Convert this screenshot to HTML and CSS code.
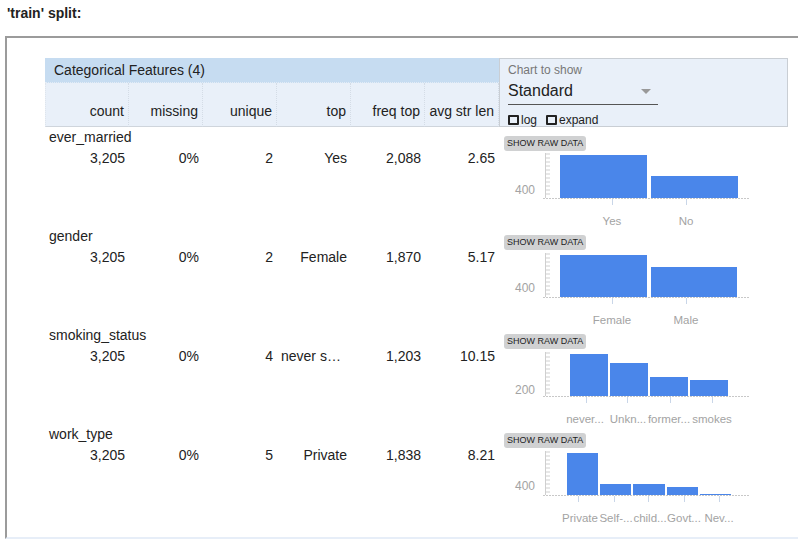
FILE: index.html
```html
<!DOCTYPE html>
<html>
<head>
<meta charset="utf-8">
<link rel="stylesheet" href="styles.css">
</head>
<body>
<div class="title">'train' split:</div>
<div class="outer">
  <div class="table">
    <div class="band">Categorical Features (4)</div>
    <div class="panel">
      <div class="panel-label">Chart to show</div>
      <div class="select"><span>Standard</span><span class="caret"></span></div>
      <div class="checks">
        <label class="check"><span class="box"></span>log</label>
        <label class="check"><span class="box"></span>expand</label>
      </div>
    </div>
    <div class="th first">count</div>
    <div class="th">missing</div>
    <div class="th">unique</div>
    <div class="th">top</div>
    <div class="th">freq top</div>
    <div class="th">avg str len</div>
  </div>

  <div class="feat">
    <div class="name">ever_married</div>
    <div class="val">3,205</div><div class="val">0%</div><div class="val">2</div><div class="val">Yes</div><div class="val">2,088</div><div class="val">2.65</div>
    <div class="chart">
      <span class="rawbtn">SHOW RAW DATA</span>
      <svg class="plot" width="289" height="75" viewBox="0 0 289 75">
        <g class="yaxis"><path d="M46.5 1V46M46 2h5M46 6h5M46 10h5M46 14h5M46 18h5M46 22h5M46 26h5M46 30h5M46 34h5M46 38h5M46 42h5"/></g>
        <rect class="bar" x="61" y="3" width="87" height="43"/>
        <rect class="bar" x="152" y="24" width="87" height="22"/>
        <path class="base" d="M44 46.5H250"/>
        <path class="xt" d="M113.5 47v6M187.5 47v6"/>
        <text class="ylab" x="36" y="42">400</text>
        <text class="xlab" x="113" y="73">Yes</text>
        <text class="xlab" x="187" y="73">No</text>
      </svg>
    </div>
  </div>

  <div class="feat">
    <div class="name">gender</div>
    <div class="val">3,205</div><div class="val">0%</div><div class="val">2</div><div class="val">Female</div><div class="val">1,870</div><div class="val">5.17</div>
    <div class="chart">
      <span class="rawbtn">SHOW RAW DATA</span>
      <svg class="plot" width="289" height="75" viewBox="0 0 289 75">
        <g class="yaxis"><path d="M46.5 2V46M46 3h5M46 7h5M46 11h5M46 15h5M46 19h5M46 23h5M46 27h5M46 31h5M46 35h5M46 39h5M46 43h5"/></g>
        <rect class="bar" x="61" y="4" width="87" height="42"/>
        <rect class="bar" x="152" y="16" width="86" height="30"/>
        <path class="base" d="M44 46.5H250"/>
        <path class="xt" d="M113.5 47v6M187.5 47v6"/>
        <text class="ylab" x="36" y="41">400</text>
        <text class="xlab" x="113" y="73">Female</text>
        <text class="xlab" x="187" y="73">Male</text>
      </svg>
    </div>
  </div>

  <div class="feat">
    <div class="name">smoking_status</div>
    <div class="val">3,205</div><div class="val">0%</div><div class="val">4</div><div class="val left">never s…</div><div class="val">1,203</div><div class="val">10.15</div>
    <div class="chart">
      <span class="rawbtn">SHOW RAW DATA</span>
      <svg class="plot" width="289" height="75" viewBox="0 0 289 75">
        <g class="yaxis"><path d="M46.5 2V46M46 3h5M46 7h5M46 11h5M46 15h5M46 19h5M46 23h5M46 27h5M46 31h5M46 35h5M46 39h5M46 43h5"/></g>
        <rect class="bar" x="71" y="4" width="38" height="42"/>
        <rect class="bar" x="111" y="13" width="38" height="33"/>
        <rect class="bar" x="151" y="27" width="38" height="19"/>
        <rect class="bar" x="191" y="30" width="38" height="16"/>
        <path class="base" d="M44 46.5H250"/>
        <path class="xt" d="M87.5 47v6M128.5 47v6M171.5 47v6M213.5 47v6"/>
        <text class="ylab" x="36" y="44">200</text>
        <text class="xlab" x="86" y="73">never...</text>
        <text class="xlab" x="129" y="73">Unkn...</text>
        <text class="xlab" x="170" y="73">former...</text>
        <text class="xlab" x="213" y="73">smokes</text>
      </svg>
    </div>
  </div>

  <div class="feat">
    <div class="name">work_type</div>
    <div class="val">3,205</div><div class="val">0%</div><div class="val">5</div><div class="val">Private</div><div class="val">1,838</div><div class="val">8.21</div>
    <div class="chart">
      <span class="rawbtn">SHOW RAW DATA</span>
      <svg class="plot" width="289" height="75" viewBox="0 0 289 75">
        <g class="yaxis"><path d="M46.5 2V46M46 3h5M46 7h5M46 11h5M46 15h5M46 19h5M46 23h5M46 27h5M46 31h5M46 35h5M46 39h5M46 43h5"/></g>
        <rect class="bar" x="68" y="4" width="31" height="42"/>
        <rect class="bar" x="101" y="35" width="31" height="11"/>
        <rect class="bar" x="134" y="35" width="32" height="11"/>
        <rect class="bar" x="168" y="38" width="31" height="8"/>
        <rect class="bar" x="201" y="45" width="31" height="1"/>
        <path class="base" d="M44 46.5H250"/>
        <path class="xt" d="M79.5 47v6M115.5 47v6M149.5 47v6M185.5 47v6M220.5 47v6"/>
        <text class="ylab" x="36" y="41">400</text>
        <text class="xlab" x="81" y="73">Private</text>
        <text class="xlab" x="117" y="73">Self-...</text>
        <text class="xlab" x="151" y="73">child...</text>
        <text class="xlab" x="185" y="73">Govt...</text>
        <text class="xlab" x="220" y="73">Nev...</text>
      </svg>
    </div>
  </div>
</div>
</body>
</html>
```
FILE: styles.css
```css
html, body {
  margin: 0;
  background: #fff;
  font-family: "Liberation Sans", Arial, sans-serif;
  color: #222;
}
.title {
  box-sizing: border-box;
  height: 36px;
  padding: 5px 0 0 7px;
  font-size: 14px;
  line-height: 16px;
  font-weight: bold;
}
.outer {
  margin-left: 5px;
  border-left: 2px solid #9b9b9b;
  border-top: 2px solid #9b9b9b;
  border-bottom: 2px solid #e7eef8;
  padding: 20px 0 14px 38px;
}
.table, .feat {
  display: grid;
  grid-template-columns: 84px repeat(5, 74px) 289px;
  font-size: 14px;
}
.table {
  grid-template-rows: 25px 44px;
}
.band {
  grid-column: 1 / 7;
  grid-row: 1;
  background: #c6dcf1;
  line-height: 25px;
  padding-left: 9px;
  border-bottom: 1px dotted #e3ecf6;
  box-sizing: border-box;
}
.th {
  grid-row: 2;
  background: #e9f0f9;
  display: flex;
  align-items: flex-end;
  justify-content: flex-end;
  padding: 0 4px 7px 0;
  line-height: 16px;
  border-right: 1px dotted #d4dce6;
  border-bottom: 1px solid #cfd5dc;
}
.th.first {
  border-left: 1px dotted #dfe5ec;
}
.panel {
  grid-column: 7;
  grid-row: 1 / 3;
  background: #e9f0f9;
  border: 1px solid #c9ced4;
  padding: 4px 0 0 8px;
}
.panel-label {
  font-size: 12px;
  line-height: 14px;
  color: #777;
}
.select {
  margin-top: 4px;
  width: 150px;
  display: flex;
  align-items: center;
  justify-content: space-between;
  font-size: 16px;
  line-height: 20px;
  padding-bottom: 3px;
  border-bottom: 1px solid #555;
  color: #222;
}
.caret {
  width: 0;
  height: 0;
  margin-right: 7px;
  border-left: 5px solid transparent;
  border-right: 5px solid transparent;
  border-top: 5px solid #999;
}
.checks {
  margin-top: 8px;
  display: flex;
  gap: 9px;
  font-size: 12px;
  line-height: 14px;
}
.check {
  display: flex;
  align-items: center;
}
.box {
  box-sizing: border-box;
  width: 11px;
  height: 10px;
  border: 2px solid #222;
  border-radius: 1px;
  margin-right: 2px;
}
.feat {
  grid-template-rows: 21px 78px;
}
.name {
  grid-column: 1 / 7;
  grid-row: 1;
  padding: 2px 0 0 4px;
  line-height: 16px;
}
.val {
  grid-row: 2;
  text-align: right;
  padding: 2px 4px 0 4px;
  line-height: 16px;
  white-space: nowrap;
}
.val.left {
  text-align: left;
}
.chart {
  grid-column: 7;
  grid-row: 1 / 3;
  padding-top: 9px;
}
.rawbtn {
  display: inline-block;
  margin-left: 5px;
  height: 15px;
  line-height: 15px;
  padding: 0 3px;
  font-size: 9px;
  background: #d0d1d2;
  border-radius: 3px;
  color: #222;
  vertical-align: top;
}
.plot {
  display: block;
  overflow: visible;
}
.bar {
  fill: #4a86ea;
}
.yaxis path {
  stroke: #cfcfcf;
  stroke-width: 1;
  fill: none;
}
.base {
  stroke: #c8c8c8;
  stroke-width: 1;
  stroke-dasharray: 2 1;
  fill: none;
}
.xt {
  stroke: #c9d6e8;
  stroke-width: 1;
}
.ylab {
  font-family: "Liberation Sans", Arial, sans-serif;
  font-size: 12px;
  fill: #a3a3a3;
  text-anchor: end;
}
.xlab {
  font-family: "Liberation Sans", Arial, sans-serif;
  font-size: 11.5px;
  fill: #a3a3a3;
  text-anchor: middle;
}
```
